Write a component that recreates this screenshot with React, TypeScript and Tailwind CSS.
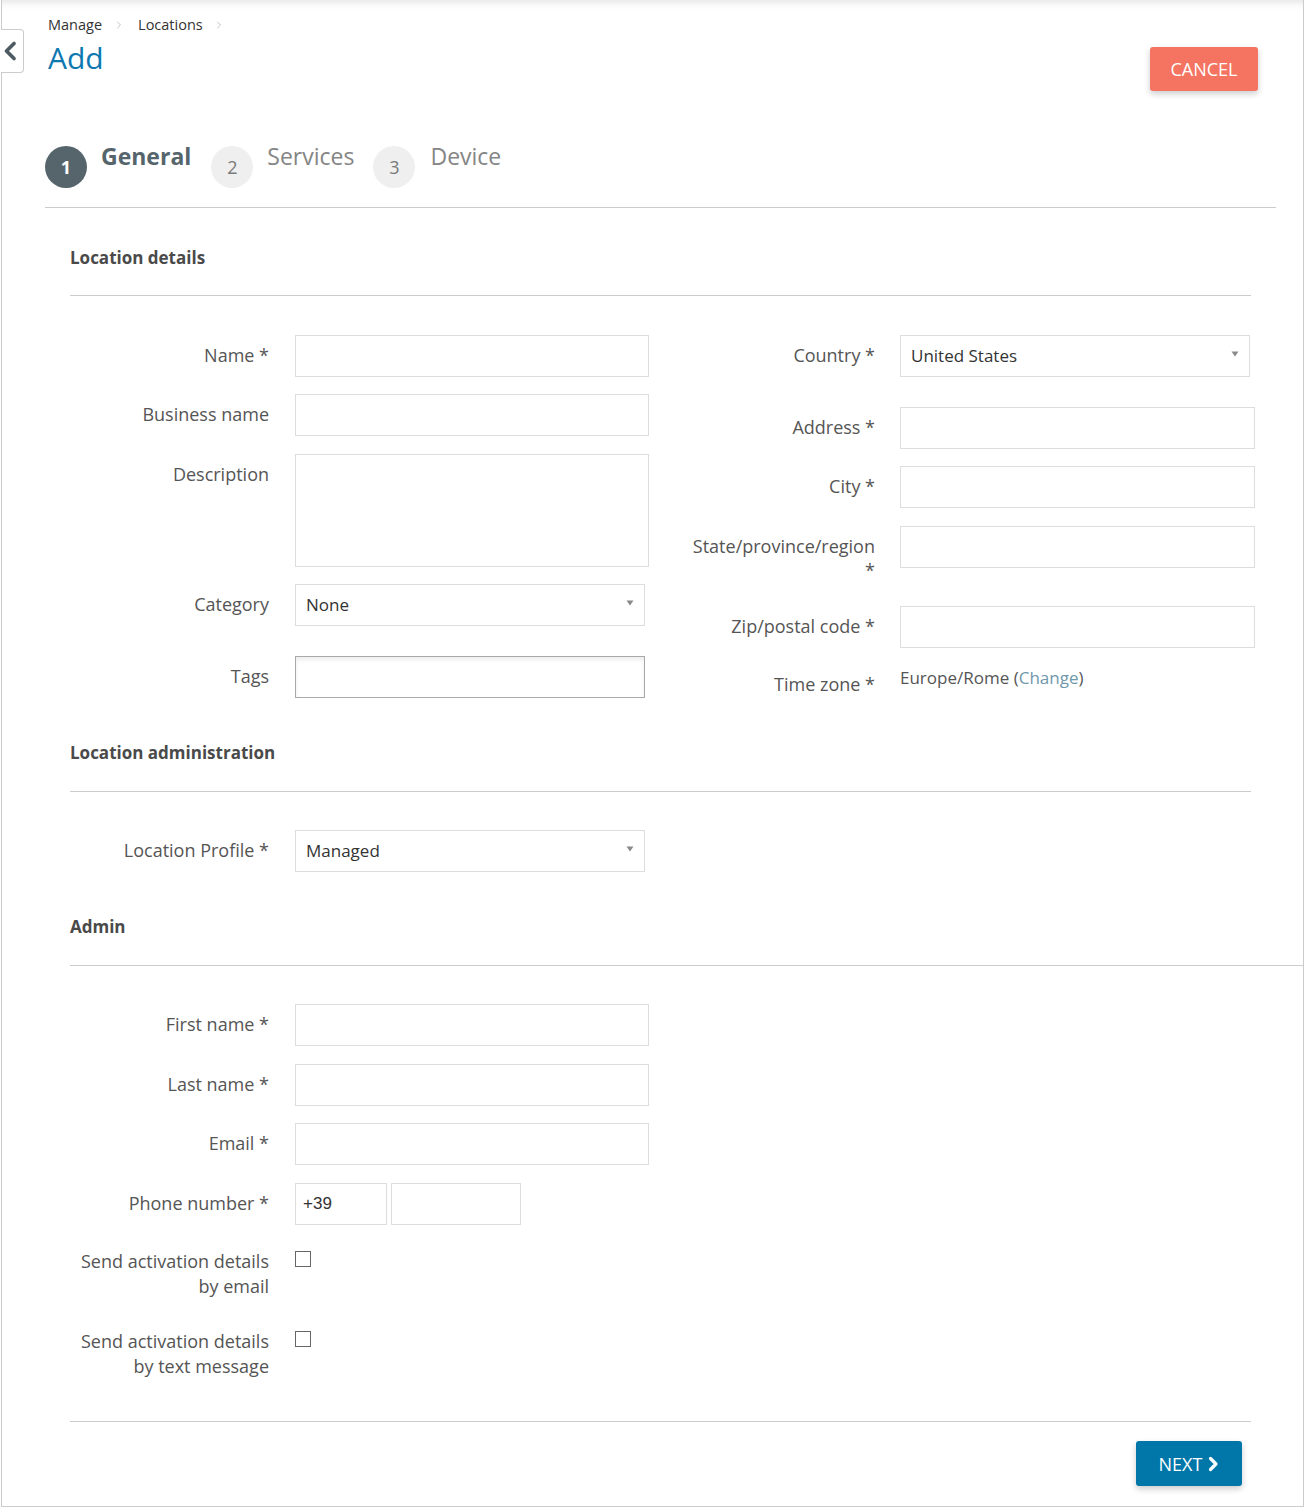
import React from "react";
import { ChevronRight } from "lucide-react";

const LABEL = "shrink-0 pt-[8px] text-right text-[18px] leading-[24px] text-[#555555]";

function Input({ w = "w-[354px]", h = "h-[42px]" }: { w?: string; h?: string }) {
  return <div className={`${w} ${h} border border-[#dddddd] bg-white`} />;
}

function Select({ value, w = "w-[350px]" }: { value: string; w?: string }) {
  return (
    <div className={`${w} h-[42px] border border-[#dddddd] bg-white flex items-center justify-between pl-[10px] pr-[10px]`}>
      <span className="text-[17px] leading-[24px] text-[#333333]">{value}</span>
      <svg width="8" height="6" viewBox="0 0 8 6" className="mb-[4px]">
        <path d="M0.5 0.5 L7.5 0.5 L4 5.5 Z" fill="#8a8a8a" />
      </svg>
    </div>
  );
}

function LRow({ label, children, className = "" }: { label: React.ReactNode; children: React.ReactNode; className?: string }) {
  return (
    <div className={`flex items-start ${className}`}>
      <div className={`w-[199px] ${LABEL}`}>{label}</div>
      <div className="ml-[26px]">{children}</div>
    </div>
  );
}

function RRow({ label, children, className = "" }: { label: React.ReactNode; children: React.ReactNode; className?: string }) {
  return (
    <div className={`flex items-start ${className}`}>
      <div className={`w-[200px] ${LABEL}`}>{label}</div>
      <div className="ml-[25px]">{children}</div>
    </div>
  );
}

function Heading({ children, className = "" }: { children: React.ReactNode; className?: string }) {
  return (
    <div className={`border-b border-[#cccccc] ${className}`}>
      <div className="text-[17px] leading-[24px] font-bold text-[#4a4a4a]">{children}</div>
    </div>
  );
}

function Checkbox() {
  return <div className="w-[16px] h-[16px] border border-[#666666] bg-white" />;
}

export default function App() {
  return (
    <div className="w-[1304px] h-[1507px] bg-white font-['Open_Sans',sans-serif]">
      <div className="relative ml-[1px] w-[1303px] h-[1507px] border-l border-r border-b border-[#cccccc] shadow-[inset_0_9px_9px_-7px_rgba(0,0,0,0.12)]">
        {/* back tab */}
        <div className="absolute left-[-1px] top-[29px] w-[23px] h-[44px] bg-white border border-l-0 border-[#cccccc] rounded-r-[4px] flex items-center">
          <svg width="14" height="20" viewBox="0 0 14 20" className="ml-[2px]">
            <path d="M11 2.5 L3.5 10 L11 17.5" fill="none" stroke="#4d5a61" strokeWidth="3.6" strokeLinecap="round" strokeLinejoin="round" />
          </svg>
        </div>

        {/* header */}
        <div className="flex items-start justify-between pl-[46px] pr-[45px]">
          <div className="pt-[15px]">
            <div className="flex items-center text-[14.5px] leading-[20px] text-[#333333]">
              <span>Manage</span>
              <ChevronRight size={12} strokeWidth={1.5} color="#b0b0b0" className="ml-[11px] mr-[11px]" />
              <span className="ml-[2px]">Locations</span>
              <ChevronRight size={12} strokeWidth={1.5} color="#b0b0b0" className="ml-[10px]" />
            </div>
            <div className="mt-[5px] text-[30px] leading-[36px] text-[#0e78b1]">Add</div>
          </div>
          <button className="mt-[47px] h-[44px] w-[108px] rounded-[3px] bg-[#f47361] text-white text-[18px] leading-[24px] shadow-[0_3px_6px_rgba(0,0,0,0.2)]">
            CANCEL
          </button>
        </div>

        {/* stepper */}
        <div className="ml-[43px] mr-[27px] mt-[49px] pb-[19px] border-b border-[#cccccc] flex items-start">
          <div className="mt-[6px] w-[42px] h-[42px] rounded-full bg-[#56656c] flex items-center justify-center text-white font-bold text-[18px]">1</div>
          <div className="ml-[14px] text-[23px] leading-[32px] font-bold text-[#56656c]">General</div>
          <div className="ml-[20px] mt-[6px] w-[42px] h-[42px] rounded-full bg-[#efefef] flex items-center justify-center text-[#7a7a7a] text-[18px]">2</div>
          <div className="ml-[14px] text-[23px] leading-[32px] text-[#858585]">Services</div>
          <div className="ml-[19px] mt-[6px] w-[42px] h-[42px] rounded-full bg-[#efefef] flex items-center justify-center text-[#7a7a7a] text-[18px]">3</div>
          <div className="ml-[15px] text-[23px] leading-[32px] text-[#858585]">Device</div>
        </div>

        {/* Location details */}
        <Heading className="ml-[68px] mr-[52px] mt-[38px] pb-[25px]">Location details</Heading>

        <div className="ml-[68px] mt-[39px] flex items-start">
          <div className="w-[579px]">
            <LRow label="Name *"><Input /></LRow>
            <LRow label="Business name" className="mt-[17px]"><Input /></LRow>
            <LRow label="Description" className="mt-[18px]"><Input h="h-[113px]" /></LRow>
            <LRow label="Category" className="mt-[17px]"><Select value="None" /></LRow>
            <LRow label="Tags" className="mt-[30px]">
              <div className="w-[350px] h-[42px] border border-[#a9a9a9] bg-white shadow-[inset_0_3px_4px_rgba(0,0,0,0.07)]" />
            </LRow>
          </div>
          <div className="ml-[26px] w-[580px]">
            <RRow label="Country *"><Select value="United States" /></RRow>
            <RRow label="Address *" className="mt-[30px]"><Input w="w-[355px]" /></RRow>
            <RRow label="City *" className="mt-[17px]"><Input w="w-[355px]" /></RRow>
            <RRow label={<>State/province/region<br />*</>} className="mt-[18px]"><Input w="w-[355px]" /></RRow>
            <RRow label="Zip/postal code *" className="mt-[24px]"><Input w="w-[355px]" /></RRow>
            <RRow label="Time zone *" className="mt-[16px]">
              <div className="pt-[2px] text-[17px] leading-[24px] text-[#555555]">
                Europe/Rome (<span className="text-[#6f98ab]">Change</span>)
              </div>
            </RRow>
          </div>
        </div>

        {/* Location administration */}
        <Heading className="ml-[68px] mr-[52px] mt-[43px] pb-[26px]">Location administration</Heading>
        <div className="ml-[68px] mt-[38px]">
          <LRow label="Location Profile *"><Select value="Managed" /></LRow>
        </div>

        {/* Admin */}
        <Heading className="ml-[68px] mt-[43px] pb-[26px]">Admin</Heading>
        <div className="ml-[68px] mt-[38px]">
          <LRow label="First name *"><Input /></LRow>
          <LRow label="Last name *" className="mt-[18px]"><Input /></LRow>
          <LRow label="Email *" className="mt-[17px]"><Input /></LRow>
          <LRow label="Phone number *" className="mt-[18px]">
            <div className="flex">
              <div className="w-[92px] h-[42px] border border-[#dddddd] bg-white flex items-center pl-[7px] font-['Liberation_Sans',sans-serif] text-[17px] text-[#333333]">+39</div>
              <div className="ml-[4px] w-[130px] h-[42px] border border-[#dddddd] bg-white" />
            </div>
          </LRow>
          <div className="flex items-start mt-[16px]">
            <div className="w-[199px] shrink-0 pt-[8px] text-right text-[18px] leading-[25px] text-[#555555]">
              Send activation details<br />by email
            </div>
            <div className="ml-[26px] mt-[10px]"><Checkbox /></div>
          </div>
          <div className="flex items-start mt-[22px]">
            <div className="w-[199px] shrink-0 pt-[8px] text-right text-[18px] leading-[25px] text-[#555555]">
              Send activation details<br />by text message
            </div>
            <div className="ml-[26px] mt-[10px]"><Checkbox /></div>
          </div>
        </div>

        {/* footer */}
        <div className="ml-[68px] mr-[52px] mt-[42px] pt-[19px] border-t border-[#cccccc] flex justify-end">
          <button className="mr-[9px] h-[45px] w-[106px] rounded-[3px] bg-[#0176a9] text-white text-[18px] leading-[24px] flex items-center justify-center shadow-[0_3px_6px_rgba(0,0,0,0.2)]">
            <span>NEXT</span>
            <svg width="12" height="16" viewBox="0 0 12 16" className="ml-[5px]">
              <path d="M3.5 2.5 L9 8 L3.5 13.5" fill="none" stroke="#ffffff" strokeWidth="3.2" strokeLinecap="round" strokeLinejoin="round" />
            </svg>
          </button>
        </div>
      </div>
    </div>
  );
}
